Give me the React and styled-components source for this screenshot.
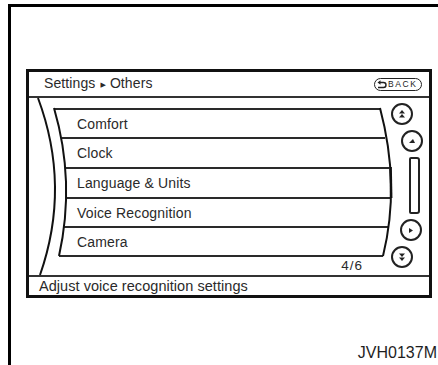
import React from "react";
import styled, { createGlobalStyle } from "styled-components";

const Global = createGlobalStyle`
  html, body { margin: 0; padding: 0; background: #fff; }
  body { width: 438px; height: 365px; overflow: hidden; font-family: "Liberation Sans", Arial, sans-serif; }
`;

const Frame = styled.div`
  margin: 4px 0 0 8px;
  height: 361px;
  border-left: 3px solid #000;
  border-top: 3px solid #000;
  box-sizing: border-box;
  display: flex;
  flex-direction: column;
`;

const Panel = styled.div`
  margin: 62px 0 0 15px;
  width: 406px;
  height: 229px;
  box-sizing: border-box;
  border: 3px solid #111;
  display: flex;
  flex-direction: column;
  color: #2a2a2a;
`;

const Header = styled.div`
  height: 24px;
  flex: none;
  border-bottom: 2px solid #333;
  display: flex;
  align-items: center;
  justify-content: space-between;
  padding: 0 7px 0 15px;
`;

const Title = styled.div`
  font-size: 14px;
  line-height: 16px;
  letter-spacing: 0.1px;
`;

const Crumb = styled.span`
  font-family: "DejaVu Sans", sans-serif;
  font-size: 7px;
  margin: 0 4px 0 5px;
  position: relative;
  top: -1px;
`;

const BackButton = styled.div`
  width: 48px;
  height: 13px;
  box-sizing: border-box;
  border: 1.5px solid #222;
  border-radius: 7px;
  display: flex;
  align-items: center;
  padding-left: 2px;
  gap: 1px;
  font-size: 8.5px;
  letter-spacing: 1.6px;
  line-height: 10px;
  color: #222;
`;

const Body = styled.div`
  position: relative;
  height: 177px;
  flex: none;
  display: flex;
`;

const ListArea = styled.div`
  width: 363px;
  flex: none;
  padding-top: 10px;
  display: flex;
  flex-direction: column;
`;

const Rule = styled.div`
  height: 2px;
  flex: none;
  background: #2a2a2a;
  margin-left: ${(p) => p.$l}px;
  margin-right: ${(p) => p.$r}px;
`;

const Row = styled.div`
  height: ${(p) => p.$h}px;
  flex: none;
  display: flex;
  align-items: center;
  padding-left: 48px;
  font-size: 14px;
  letter-spacing: 0.15px;
`;

const Count = styled.div`
  height: 18px;
  line-height: 18px;
  text-align: right;
  padding-right: 29px;
  font-size: 13.5px;
  letter-spacing: 1px;
`;

const Curves = styled.svg`
  position: absolute;
  left: 0;
  top: 0;
  width: 400px;
  height: 177px;
  pointer-events: none;
  overflow: visible;
`;

const ScrollColumn = styled.div`
  flex: 1;
  padding-top: 5px;
  display: flex;
  flex-direction: column;
  gap: 5px;
`;

const RoundButton = styled.div`
  width: 22px;
  height: 22px;
  box-sizing: border-box;
  border: 2px solid #222;
  border-radius: 50%;
  margin-left: ${(p) => p.$ml}px;
  display: flex;
  align-items: center;
  justify-content: center;
`;

const Track = styled.div`
  width: 11px;
  height: 57px;
  box-sizing: border-box;
  border: 2px solid #222;
  border-radius: 2px 3px 3px 2px;
  margin-left: 17px;
`;

const Status = styled.div`
  flex: 1;
  border-top: 2px solid #333;
  display: flex;
  align-items: center;
  padding-left: 10px;
  font-size: 14.5px;
  letter-spacing: 0.05px;
`;

const Caption = styled.div`
  margin-top: 45px;
  padding-right: 1px;
  text-align: right;
  font-size: 16px;
  line-height: 20px;
  color: #1e1e1e;
`;

const rows = [
  { label: "Comfort", h: 27 },
  { label: "Clock", h: 28 },
  { label: "Language & Units", h: 28 },
  { label: "Voice Recognition", h: 27 },
  { label: "Camera", h: 27 },
];

const rules = [
  { l: 25, r: 12 },
  { l: 33, r: 7 },
  { l: 37, r: 3 },
  { l: 37, r: 1 },
  { l: 34, r: 4 },
  { l: 30, r: 9 },
];

const Tri = ({ d }) => <path d={d} fill="#222" />;

const Icon = ({ kind }) => (
  <svg width="18" height="18" viewBox="0 0 18 18">
    {kind === "dup" && (
      <>
        <Tri d="M6 8.5 L9 5 L12 8.5 Z" />
        <Tri d="M6 12.5 L9 9 L12 12.5 Z" />
      </>
    )}
    {kind === "up" && <Tri d="M6 11 L10 7 L12 11 Z" />}
    {kind === "down" && <Tri d="M7 7 L11 9.5 L7 12 Z" />}
    {kind === "ddown" && (
      <>
        <Tri d="M6 5.5 L9 9 L12 5.5 Z" />
        <Tri d="M6 9.5 L9 13 L12 9.5 Z" />
      </>
    )}
  </svg>
);

const BackIcon = () => (
  <svg width="10" height="9" viewBox="0 0 10 9">
    <path d="M0.5 2.5 L3.5 0.3 L3.5 4.7 Z" fill="#222" />
    <path d="M3 2.5 H6.5 A2.5 2.5 0 0 1 6.5 7.5 H1" fill="none" stroke="#222" strokeWidth="1.4" />
  </svg>
);

export default function App() {
  return (
    <>
      <Global />
      <Frame>
        <Panel>
          <Header>
            <Title>
              Settings<Crumb>▶</Crumb>Others
            </Title>
            <BackButton>
              <BackIcon />
              BACK
            </BackButton>
          </Header>
          <Body>
            <ListArea>
              {rows.map((row, i) => (
                <React.Fragment key={row.label}>
                  <Rule $l={rules[i].l} $r={rules[i].r} />
                  <Row $h={row.h}>{row.label}</Row>
                </React.Fragment>
              ))}
              <Rule $l={rules[5].l} $r={rules[5].r} />
              <Count>4/6</Count>
            </ListArea>
            <ScrollColumn>
              <RoundButton $ml={-1}>
                <Icon kind="dup" />
              </RoundButton>
              <RoundButton $ml={9}>
                <Icon kind="up" />
              </RoundButton>
              <Track />
              <RoundButton $ml={8}>
                <Icon kind="down" />
              </RoundButton>
              <RoundButton $ml={-1}>
                <Icon kind="ddown" />
              </RoundButton>
            </ScrollColumn>
            <Curves viewBox="0 0 400 177">
              <path d="M9 0 Q42 88.5 11 177" fill="none" stroke="#111" strokeWidth="2" />
              <path d="M25 10 Q46.5 83.5 30 158" fill="none" stroke="#111" strokeWidth="2" />
              <path d="M351 10 Q371.5 87 354 158" fill="none" stroke="#111" strokeWidth="2" />
              <path d="M361.6 69 L362.2 100" fill="none" stroke="#111" strokeWidth="2.5" />
            </Curves>
          </Body>
          <Status>Adjust voice recognition settings</Status>
        </Panel>
        <Caption>JVH0137M</Caption>
      </Frame>
    </>
  );
}
